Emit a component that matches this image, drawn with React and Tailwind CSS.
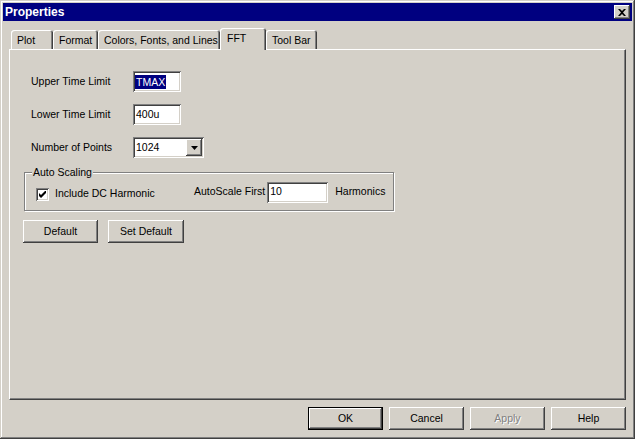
const raised =
  "bg-[#d4d0c8] shadow-[inset_-1px_-1px_#404040,inset_1px_1px_#ffffff,inset_-2px_-2px_#808080]";
const sunken =
  "bg-white shadow-[inset_1px_1px_#808080,inset_-1px_-1px_#ffffff,inset_2px_2px_#404040,inset_-2px_-2px_#d4d0c8]";

const tabs = [
  { label: "Plot", w: "w-[42px]" },
  { label: "Format", w: "w-[45px]" },
  { label: "Colors, Fonts, and Lines", w: "w-[122px]" },
  { label: "FFT", w: "w-[46px]", active: true },
  { label: "Tool Bar", w: "w-[51px]" },
];

const Field = ({ label, children }) => (
  <div className="flex items-center h-[21px]">
    <span className="w-[102px]">{label}</span>
    {children}
  </div>
);

const Button = ({ children, className = "", disabled, isDefault }) => (
  <div className={`${isDefault ? "border border-black" : ""} ${className}`}>
    <button
      className={`${raised} w-full h-full flex items-center justify-center ${
        disabled ? "text-[#808080] [text-shadow:1px_1px_#ffffff]" : "text-black"
      }`}
    >
      {children}
    </button>
  </div>
);

const App = () => {
  return (
    <div className="w-[635px] h-[439px] bg-[#d4d0c8] p-[3px] flex flex-col whitespace-nowrap font-['Liberation_Sans',Arial,sans-serif] text-[10.5px] text-black shadow-[inset_-1px_-1px_#404040,inset_1px_1px_#d4d0c8,inset_-2px_-2px_#808080,inset_2px_2px_#ffffff]">
      {/* title bar */}
      <div className="h-[18px] bg-[#000080] flex items-center justify-between pl-[2px] pr-[2px]">
        <span className="text-white font-bold text-[12px]">Properties</span>
        <button className={`${raised} w-[16px] h-[14px] flex items-center justify-center`}>
          <svg width="8" height="7" viewBox="0 0 8 7">
            <path d="M0 0h2l2 2 2-2h2L5 3.5 8 7H6L4 5 2 7H0l3-3.5z" fill="#000" />
          </svg>
        </button>
      </div>

      {/* tabs */}
      <div className="mt-[7px] h-[21px] flex items-end pl-[8px]">
        {tabs.map((t) =>
          t.active ? (
            <div
              key={t.label}
              className={`${t.w} h-[22px] -mb-px relative z-10 bg-[#d4d0c8] rounded-t-[3px] shadow-[inset_1px_1px_#ffffff,inset_-1px_0_#404040,inset_-2px_0_#808080] pl-[7px] pt-[3px]`}
            >
              {t.label}
            </div>
          ) : (
            <div
              key={t.label}
              className={`${t.w} h-[19px] bg-[#d4d0c8] rounded-t-[3px] shadow-[inset_1px_1px_#ffffff,inset_-1px_0_#404040,inset_-2px_0_#808080] pl-[6px] pt-[3px]`}
            >
              {t.label}
            </div>
          )
        )}
      </div>

      {/* panel */}
      <div className="ml-[6px] w-[617px] h-[351px] border-l border-t border-white border-r border-b border-r-[#404040] border-b-[#404040] shadow-[inset_-1px_-1px_#808080] pt-[21px] pl-[21px]">
        <div className="flex flex-col gap-[12px]">
          <Field label="Upper Time Limit">
            <div className={`${sunken} w-[48px] h-[21px] flex items-center pl-[2px]`}>
              <span className="bg-[#000080] text-white px-px leading-[14px]">TMAX</span>
            </div>
          </Field>
          <Field label="Lower Time Limit">
            <div className={`${sunken} w-[48px] h-[21px] flex items-center pl-[3px]`}>400u</div>
          </Field>
          <Field label="Number of Points">
            <div className={`${sunken} w-[71px] h-[21px] flex items-center justify-between pl-[3px] pr-[2px]`}>
              <span>1024</span>
              <div className={`${raised} w-[16px] h-[17px] flex items-center justify-center`}>
                <svg width="7" height="4" viewBox="0 0 7 4">
                  <path d="M0 0h7L3.5 4z" fill="#000" />
                </svg>
              </div>
            </div>
          </Field>
        </div>

        {/* group box */}
        <div className="relative mt-[14px] ml-[-7px] w-[370px] h-[39px] border border-[#808080] shadow-[1px_1px_#ffffff,inset_1px_1px_#ffffff] flex items-center pl-[11px]">
          <span className="absolute left-[7px] top-[-8px] bg-[#d4d0c8] px-[1px] leading-[14px]">
            Auto Scaling
          </span>
          <div className="flex items-center mt-[5px] w-[158px]">
            <div className={`${sunken} w-[13px] h-[13px] flex items-center justify-center`}>
              <svg width="7" height="7" viewBox="0 0 7 7">
                <path d="M0 2v3l2 2 5-5V-1L2 4z" fill="#000" />
              </svg>
            </div>
            <span className="ml-[6px]">Include DC Harmonic</span>
          </div>
          <div className="flex items-center mt-[1px]">
            <span>AutoScale First</span>
            <div className={`${sunken} ml-[2px] w-[61px] h-[21px] flex items-center pl-[3px]`}>10</div>
            <span className="ml-[7px]">Harmonics</span>
          </div>
        </div>

        <div className="flex gap-[10px] mt-[9px] ml-[-8px]">
          <Button className="w-[75px] h-[23px]">Default</Button>
          <Button className="w-[76px] h-[23px]">Set Default</Button>
        </div>
      </div>

      {/* bottom buttons */}
      <div className="flex justify-end gap-[6px] mt-[7px] pr-[6px]">
        <Button isDefault className="w-[75px] h-[23px]">OK</Button>
        <Button className="w-[75px] h-[23px]">Cancel</Button>
        <Button disabled className="w-[75px] h-[23px]">Apply</Button>
        <Button className="w-[75px] h-[23px]">Help</Button>
      </div>
    </div>
  );
};

export default App;
